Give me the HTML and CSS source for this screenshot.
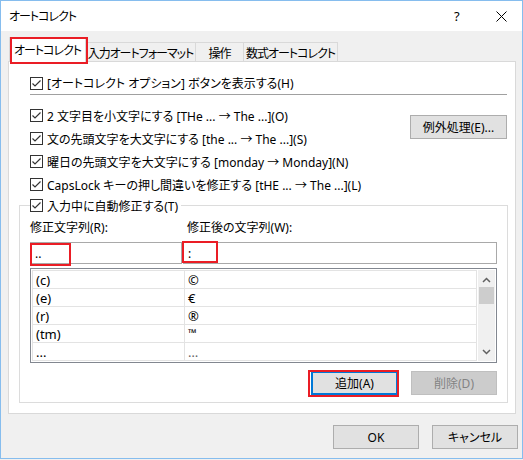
FILE: index.html
```html
<!DOCTYPE html>
<html lang="ja">
<head>
<meta charset="utf-8">
<link rel="stylesheet" href="styles.css">
</head>
<body>
<div class="window">
  <div class="titlebar">
    <span class="title">オートコレクト</span>
    <span class="help">?</span>
    <span class="close"><svg width="11" height="11" viewBox="0 0 11 11"><path d="M0.5 0.5 L10.5 10.5 M10.5 0.5 L0.5 10.5" stroke="#000" stroke-width="1" fill="none"/></svg></span>
  </div>
  <div class="body">
    <div class="tabs">
      <div class="tab selected">オートコレクト</div>
      <div class="tab">入力オートフォーマット</div>
      <div class="tab">操作</div>
      <div class="tab last">数式オートコレクト</div>
    </div>
    <div class="panel">
      <div class="row first"><svg class="cb" width="13" height="13" viewBox="0 0 13 13"><rect x="0.5" y="0.5" width="12" height="12" fill="#fff" stroke="#333"/><path d="M2.5 6.5 L5 9 L10.5 3.5" stroke="#333" stroke-width="1.2" fill="none"/></svg><span>[オートコレクト オプション] ボタンを表示する(H)</span></div>
      <hr class="sep">
      <div class="opts">
        <div class="optlist">
          <div class="row"><svg class="cb" width="13" height="13" viewBox="0 0 13 13"><rect x="0.5" y="0.5" width="12" height="12" fill="#fff" stroke="#333"/><path d="M2.5 6.5 L5 9 L10.5 3.5" stroke="#333" stroke-width="1.2" fill="none"/></svg><span>2 文字目を小文字にする [THe ... → The ...](O)</span></div>
          <div class="row"><svg class="cb" width="13" height="13" viewBox="0 0 13 13"><rect x="0.5" y="0.5" width="12" height="12" fill="#fff" stroke="#333"/><path d="M2.5 6.5 L5 9 L10.5 3.5" stroke="#333" stroke-width="1.2" fill="none"/></svg><span>文の先頭文字を大文字にする [the ... → The ...](S)</span></div>
          <div class="row"><svg class="cb" width="13" height="13" viewBox="0 0 13 13"><rect x="0.5" y="0.5" width="12" height="12" fill="#fff" stroke="#333"/><path d="M2.5 6.5 L5 9 L10.5 3.5" stroke="#333" stroke-width="1.2" fill="none"/></svg><span>曜日の先頭文字を大文字にする [monday → Monday](N)</span></div>
          <div class="row"><svg class="cb" width="13" height="13" viewBox="0 0 13 13"><rect x="0.5" y="0.5" width="12" height="12" fill="#fff" stroke="#333"/><path d="M2.5 6.5 L5 9 L10.5 3.5" stroke="#333" stroke-width="1.2" fill="none"/></svg><span>CapsLock キーの押し間違いを修正する [tHE ... → The ...](L)</span></div>
        </div>
        <button class="btn exc">例外処理(E)...</button>
      </div>
      <fieldset class="group">
        <legend class="legend"><svg class="cb" width="13" height="13" viewBox="0 0 13 13"><rect x="0.5" y="0.5" width="12" height="12" fill="#fff" stroke="#333"/><path d="M2.5 6.5 L5 9 L10.5 3.5" stroke="#333" stroke-width="1.2" fill="none"/></svg><span>入力中に自動修正する(T)</span></legend>
        <div class="labels"><span class="c1">修正文字列(R):</span><span class="c2 lab2">修正後の文字列(W):</span></div>
        <div class="inputs">
          <div class="inp c1"><span class="val">..</span><span class="mark m1"></span></div>
          <div class="inp c2"><span class="val">:</span><span class="mark m2"></span></div>
        </div>
        <div class="list">
          <table class="grid">
            <tr><td class="k">(c)</td><td>©</td></tr>
            <tr><td class="k">(e)</td><td>€</td></tr>
            <tr><td class="k">(r)</td><td>®</td></tr>
            <tr><td class="k">(tm)</td><td class="tm">™</td></tr>
            <tr><td class="k">...</td><td class="ell">…</td></tr>
          </table>
          <div class="scroll">
            <svg class="arr" width="9" height="6" viewBox="0 0 9 6"><path d="M1 5 L4.5 1.5 L8 5" stroke="#606060" stroke-width="1.5" fill="none"/></svg>
            <div class="thumb"></div>
            <div class="fill"></div>
            <svg class="arr" width="9" height="6" viewBox="0 0 9 6"><path d="M1 1 L4.5 4.5 L8 1" stroke="#606060" stroke-width="1.5" fill="none"/></svg>
          </div>
        </div>
        <div class="actions">
          <button class="btn add">追加(A)</button>
          <button class="btn disabled">削除(D)</button>
        </div>
      </fieldset>
    </div>
    <div class="footer">
      <button class="btn ok">OK</button>
      <button class="btn ok">キャンセル</button>
    </div>
  </div>
</div>
</body>
</html>
```
FILE: styles.css
```css
* { box-sizing: border-box; }
html, body {
  margin: 0;
  padding: 0;
  width: 523px;
  height: 460px;
  overflow: hidden;
  background: #f0f0f0;
}
body {
  font-family: "Noto Sans", "Noto Sans CJK JP", sans-serif;
  font-feature-settings: "palt";
  font-size: 12px;
  color: #000;
}
.window {
  width: 523px;
  height: 459px;
  border: 1px solid #86bdee;
  background: #f0f0f0;
}
.titlebar {
  height: 30px;
  background: #fff;
  display: flex;
  align-items: center;
  padding-left: 8px;
}
.title { flex: 1; letter-spacing: -1px; }
.help {
  width: 12px;
  margin-right: 30px;
  font-size: 13px;
}
.close {
  width: 11px;
  height: 11px;
  margin-right: 15px;
  display: flex;
}
.body {
  padding-top: 6px;
}
.tabs {
  display: flex;
  align-items: flex-end;
  height: 25px;
  margin-left: 8px;
}
.tab {
  height: 19px;
  margin-bottom: 1px;
  border: 1px solid #d9d9d9;
  border-bottom: none;
  border-right: none;
  background: #f0f0f0;
  display: flex;
  align-items: center;
  justify-content: center;
  padding-top: 1px;
  white-space: nowrap;
  letter-spacing: -1px;
  flex: none;
  overflow: hidden;
}
.tab:nth-child(2) { width: 109px; border-left: none; }
.tab:nth-child(3) { width: 48px; }
.tab.last { width: 95px; border-right: 1px solid #d9d9d9; }
.tab.selected {
  position: relative;
  z-index: 1;
  width: 77px;
  height: 25px;
  margin-bottom: 0;
  background: #fff;
  border-right: 1px solid #d9d9d9;
  padding-top: 0;
  padding-bottom: 1px;
  overflow: visible;
}
.tab.selected::after {
  content: "";
  position: absolute;
  left: 0;
  top: -1px;
  right: -3px;
  bottom: -2px;
  border: 2px solid #ea1d25;
}
.panel {
  margin-top: -1px;
  margin-left: 7px;
  width: 508px;
  height: 353px;
  background: #fff;
  border: 1px solid #d9d9d9;
  padding: 10px 7px 0 10px;
}
.row {
  display: flex;
  align-items: center;
  height: 23px;
  padding-left: 11px;
  white-space: nowrap;
}
.row.first { height: 22px; }
.cb { flex: none; margin-right: 4px; }
.sep {
  margin: 0 1px 9px 11px;
  border: none;
  border-top: 1px solid #a0a0a0;
  height: 0;
}
.opts { display: flex; }
.optlist { flex: 1; }
.btn {
  font: inherit;
  font-feature-settings: "palt";
  color: #000;
  background: #e1e1e1;
  border: 1px solid #adadad;
  padding: 0;
  height: 24px;
  white-space: nowrap;
}
.exc {
  width: 97px;
  margin-top: 11px;
  margin-right: 1px;
}
.group {
  margin: 0;
  padding: 0 10px 7px 10px;
  border: 1px solid #dcdcdc;
  min-width: 0;
}
.legend {
  padding: 0 3px 0 0;
  display: flex;
  align-items: center;
  height: 19px;
  white-space: nowrap;
}
.labels {
  display: flex;
  height: 18px;
  line-height: 18px;
  margin-top: 4px;
}
.c1 { width: 153px; flex: none; }
.lab2 { padding-left: 4px; }
.inputs {
  display: flex;
  margin-top: 5px;
  height: 22px;
}
.inp {
  position: relative;
  border: 1px solid #a9a9a9;
  height: 22px;
  display: flex;
  align-items: center;
  padding-left: 4px;
}
.inp.c1 { width: 152px; margin-right: 1px; }
.inp.c2 { flex: 1; }
.mark {
  position: absolute;
  border: 2px solid #ea1d25;
}
.m1 { left: -1px; top: 0; width: 41px; height: 23px; }
.m2 { left: -2px; top: -2px; width: 36px; height: 22px; }
.list {
  margin-top: 4px;
  height: 95px;
  border: 1px solid #828790;
  padding: 1px;
  display: flex;
}
.grid {
  flex: 1;
  border-collapse: collapse;
  margin: 0;
  height: 91px;
  align-self: flex-start;
  font-size: 13px;
}
.grid td {
  border: 1px solid #e3e3e3;
  height: 18px;
  padding: 0 0 0 3px;
  line-height: 16px;
  vertical-align: middle;
}
.grid td.k { width: 152px; }
.grid td.tm { font-size: 11px; vertical-align: top; }
.grid td.ell { color: #666; }
.scroll {
  width: 17px;
  margin-left: 1px;
  background: #f0f0f0;
  display: flex;
  flex-direction: column;
  align-items: center;
}
.arr { margin-top: 7px; margin-bottom: 4px; flex: none; }
.scroll .arr:last-child { margin-top: 0; margin-bottom: 6px; }
.thumb {
  width: 15px;
  height: 17px;
  background: #cdcdcd;
}
.fill { flex: 1; }
.actions {
  display: flex;
  justify-content: flex-end;
  margin-top: 8px;
  gap: 13px;
}
.add {
  position: relative;
  width: 87px;
  border: 2px solid #0078d7;
}
.add::after {
  content: "";
  position: absolute;
  left: -5px;
  top: -3px;
  right: -3px;
  bottom: -4px;
  border: 2px solid #ea1d25;
}
.disabled {
  width: 86px;
  background: #cccccc;
  border-color: #bfbfbf;
  color: #838383;
}
.footer {
  display: flex;
  justify-content: flex-end;
  gap: 13px;
  padding-top: 11px;
  padding-right: 4px;
}
.ok { width: 86px; }
```
